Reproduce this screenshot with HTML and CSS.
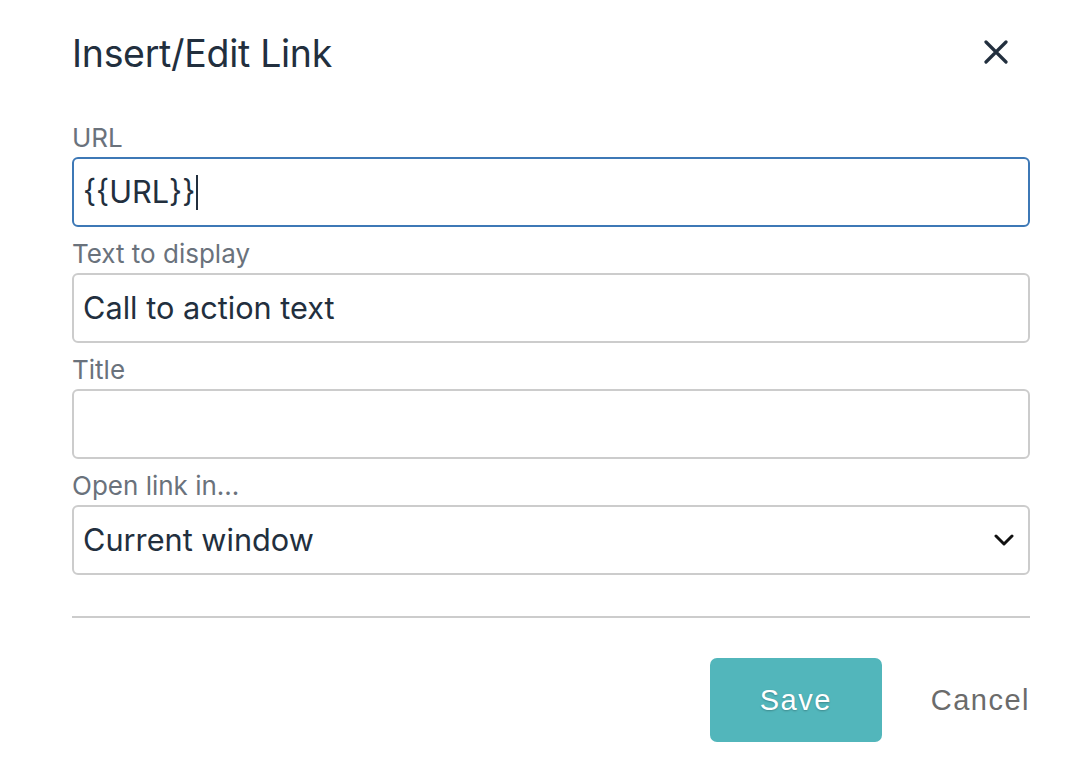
FILE: index.html
```html
<!DOCTYPE html>
<html>
<head>
  <title>Insert/Edit Link</title>
  <link rel="stylesheet" href="styles.css">
</head>
<body>

<div class="dialog">
  <header class="dialog-header">
    <h2>Insert/Edit Link</h2>
    <button class="close-btn" aria-label="Close">
      <svg width="24" height="24" viewBox="0 0 24 24">
        <path d="M2 2 L22 22 M22 2 L2 22" stroke="#222f3e" stroke-width="3.2" stroke-linecap="round" fill="none"/>
      </svg>
    </button>
  </header>

  <div class="dialog-body">
    <label>URL</label>
    <div class="field focused">{{URL}}<span class="caret"></span></div>

    <label>Text to display</label>
    <div class="field">Call to action text</div>

    <label>Title</label>
    <div class="field"></div>

    <label>Open link in...</label>
    <div class="field select">
      <span>Current window</span>
      <svg width="20" height="14" viewBox="0 0 20 14">
        <path d="M2 3 L10 11 L18 3" stroke="#111" stroke-width="3" fill="none" stroke-linecap="round" stroke-linejoin="round"/>
      </svg>
    </div>
  </div>

  <hr class="divider">

  <footer class="dialog-footer">
    <button class="btn-save">Save</button>
    <button class="btn-cancel">Cancel</button>
  </footer>
</div>

</body>
</html>
```

FILE: styles.css
```css
body {
  font-family: Inter, 'Noto Sans', sans-serif;
  margin: 0;
  padding: 0;
  background: white;
  color: #222f3e;
}

.dialog {
  width: 958px;
  padding: 0 62px 0 72px;
}

.dialog-header {
  display: flex;
  justify-content: space-between;
  align-items: center;
  height: 111px;
}

h2 {
  margin: 0;
  font-size: 37.5px;
  font-weight: 400;
  letter-spacing: -0.3px;
  padding-bottom: 4px;
}

.close-btn {
  background: none;
  border: none;
  padding: 0;
  margin-right: 22px;
  margin-bottom: 4px;
  cursor: pointer;
}

.dialog-body label {
  display: block;
  height: 46px;
  line-height: 54px;
  font-size: 26px;
  color: #6a727c;
}

.field {
  box-sizing: border-box;
  height: 70px;
  border: 2px solid #cccccc;
  border-radius: 6px;
  padding: 0 10px 0 9px;
  font-size: 30.7px;
  line-height: 66px;
  color: #222f3e;
  display: flex;
  align-items: center;
}

.field.focused {
  border-color: #3d78b6;
}

.caret {
  display: inline-block;
  width: 2px;
  height: 35px;
  background: #222f3e;
  margin-left: 1px;
}

.field.select {
  justify-content: space-between;
  padding-right: 14px;
}

.divider {
  border: none;
  height: 2px;
  background: #cccccc;
  margin: 41px 0 0 0;
}

.dialog-footer {
  display: flex;
  justify-content: flex-end;
  align-items: center;
  gap: 49px;
  padding-top: 40px;
}

.btn-save {
  width: 172px;
  height: 84px;
  background-color: #52b6bb;
  color: white;
  border: none;
  border-radius: 7px;
  font-family: 'Liberation Sans', Arial, sans-serif;
  font-size: 29px;
  letter-spacing: 1.5px;
  text-shadow: 0 1px 2px rgba(0,0,0,0.25);
  cursor: pointer;
}

.btn-cancel {
  background: none;
  border: none;
  padding: 0;
  color: #6b6b6b;
  font-family: 'Liberation Sans', Arial, sans-serif;
  font-size: 29px;
  letter-spacing: 1.5px;
  cursor: pointer;
}
```
